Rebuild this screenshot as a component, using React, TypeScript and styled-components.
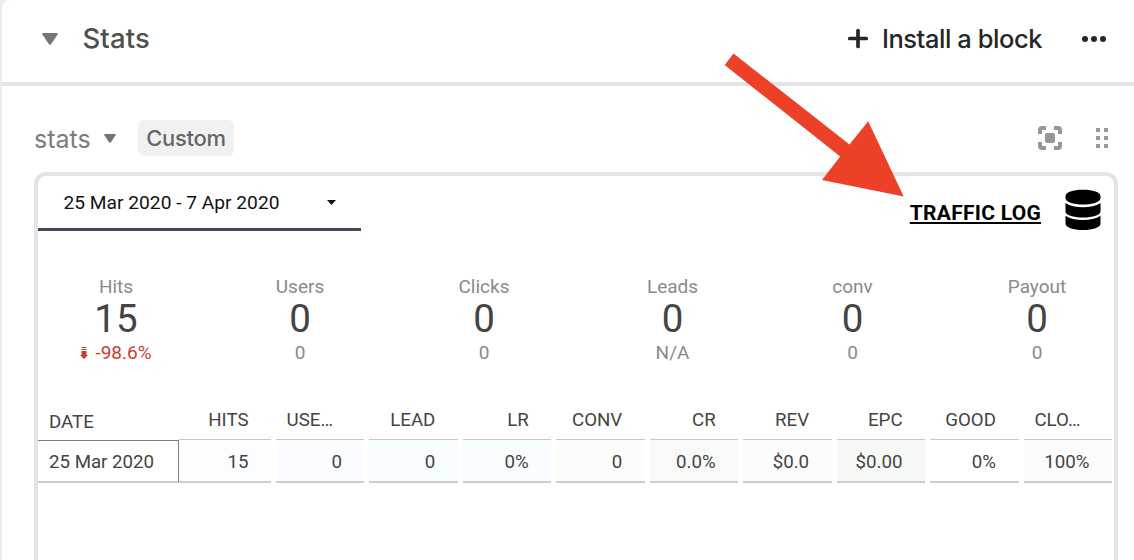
import React from "react";
import styled, { createGlobalStyle } from "styled-components";

const GlobalStyle = createGlobalStyle`
  *, *::before, *::after { box-sizing: border-box; }
  body { margin: 0; background: #ececec; overflow: hidden; }
`;

const Page = styled.main`
  position: relative;
  display: flex;
  flex-direction: column;
  height: 560px;
  margin-left: 2px;
  background: #fff;
  border-top-left-radius: 8px;
  overflow: hidden;
  font-family: Inter, "Liberation Sans", sans-serif;
`;

const Header = styled.header`
  display: flex;
  align-items: center;
  flex: none;
  height: 86px;
  padding: 0 28px 4px 40px;
  border-bottom: 4px solid #e4e4e4;
`;

const Title = styled.h1`
  margin: -2px auto 0 24.5px;
  font-size: 27.5px;
  font-weight: 500;
  line-height: 32px;
  letter-spacing: 0.1px;
  color: #505050;
`;

const InstallButton = styled.button`
  display: flex;
  align-items: center;
  gap: 14px;
  margin: 0 40px 0 0;
  padding: 0;
  border: 0;
  background: none;
  font: 500 25.5px/32px Inter, "Liberation Sans", sans-serif;
  letter-spacing: -0.45px;
  color: #262626;
  white-space: nowrap;
`;

const Icon = styled.svg`
  display: block;
  flex: none;
  overflow: visible;
`;

const BlockBar = styled.div`
  display: flex;
  align-items: center;
  flex: none;
  height: 36px;
  margin: 34px 26px 16px 32px;
`;

const BlockName = styled.span`
  width: 57px;
  margin-right: 13px;
  padding-top: 1px;
  font-size: 25px;
  line-height: 36px;
  color: #7c7c7c;
`;

const Tag = styled.span`
  width: 96px;
  height: 36px;
  margin: 0 auto 0 22px;
  border-radius: 6px;
  background: #f1f1f1;
  font-size: 22px;
  font-weight: 500;
  letter-spacing: -0.3px;
  line-height: 36px;
  text-align: center;
  color: #666;
`;

const BarIcons = styled.div`
  display: flex;
  align-items: center;
  gap: 34px;
`;

const Report = styled.section`
  display: flex;
  flex-direction: column;
  flex: none;
  width: 1084px;
  height: 420px;
  margin-left: 32px;
  border: 4px solid #e4e4e4;
  border-radius: 12px;
  font-family: Roboto, "Liberation Sans", sans-serif;
`;

const ReportTop = styled.div`
  display: flex;
  align-items: flex-start;
  justify-content: space-between;
  height: 94px;
`;

const DateRange = styled.div`
  display: flex;
  align-items: center;
  justify-content: space-between;
  width: 323px;
  height: 55px;
  padding: 1px 25px 0 25.5px;
  border-bottom: 3px solid #414559;
  font-size: 19.2px;
  color: #111;
`;

const LogLink = styled.div`
  display: flex;
  align-items: center;
  gap: 24px;
  margin: 13px 13px 0 0;
`;

const LogText = styled.a`
  margin-top: 6px;
  font-size: 21px;
  font-weight: 700;
  line-height: 24px;
  letter-spacing: 0.27px;
  color: #000;
  text-decoration: underline;
  text-decoration-thickness: 2px;
  text-underline-offset: 2px;
  text-decoration-skip-ink: none;
`;

const Scores = styled.div`
  display: grid;
  grid-template-columns: 184px 184px 188.5px 180px 184.5px 140px;
  height: 133px;
  padding-left: 8px;
`;

const Score = styled.div`
  display: flex;
  flex-direction: column;
  align-items: center;
  width: 140px;
  padding-top: 5px;
`;

const ScoreLabel = styled.span`
  font-size: 19px;
  line-height: 24px;
  color: #8a8a8a;
`;

const ScoreValue = styled.span`
  font-size: 38.5px;
  line-height: 40px;
  color: #444;
`;

const ScoreDelta = styled.span<{ $negative?: boolean }>`
  display: flex;
  align-items: center;
  gap: 7px;
  margin-top: 2px;
  font-size: 19px;
  line-height: 24px;
  color: ${(p) => (p.$negative ? "#c83c34" : "#8a8a8a")};
`;

const Table = styled.div`
  display: flex;
  flex-direction: column;
`;

const Row = styled.div`
  display: grid;
  grid-template-columns: 136px 92px repeat(9, 88.45px);
  column-gap: 5px;
  width: 1074px;
`;

const HeadCell = styled.div<{ $date?: boolean }>`
  height: 36px;
  padding: ${(p) => (p.$date ? "7px 0 0 11px" : "5px 22.5px 0 10px")};
  font-size: 18.7px;
  line-height: 24px;
  text-align: ${(p) => (p.$date ? "left" : "right")};
  color: #444;
  white-space: nowrap;
`;

const Clipped = styled(HeadCell)`
  padding: 5px 31.5px 0 0;
`;

const Cell = styled.div<{ $fill?: string }>`
  height: 44px;
  padding-right: 22.5px;
  border-top: 1px solid #c8c8c8;
  border-bottom: 2px solid #cccdce;
  background: ${(p) => p.$fill || "#fff"};
  font-size: 18.7px;
  line-height: 45px;
  text-align: right;
  color: #444;
`;

const DateCell = styled(Cell)`
  height: 43px;
  margin: 1px -5px 0 0;
  padding: 0 0 0 11px;
  border-top-color: #7c7c7c;
  border-right: 1px solid #7c7c7c;
  line-height: 43px;
  text-align: left;
`;

const Pointer = styled.svg`
  position: absolute;
  left: 722px;
  top: 50px;
  pointer-events: none;
`;

const scores = [
  { label: "Hits", value: "15", delta: "-98.6%", down: true },
  { label: "Users", value: "0", delta: "0" },
  { label: "Clicks", value: "0", delta: "0" },
  { label: "Leads", value: "0", delta: "N/A" },
  { label: "conv", value: "0", delta: "0" },
  { label: "Payout", value: "0", delta: "0" },
];

const columns = [
  { name: "HITS", value: "15", fill: "#fcfdff" },
  { name: "USE…", value: "0", fill: "#fafcff", clipped: true },
  { name: "LEAD", value: "0", fill: "#f8fdff" },
  { name: "LR", value: "0%", fill: "#f8fdff" },
  { name: "CONV", value: "0", fill: "#fbfdfb" },
  { name: "CR", value: "0.0%", fill: "#f8faf8" },
  { name: "REV", value: "$0.0", fill: "#fcfcfc" },
  { name: "EPC", value: "$0.00", fill: "#f7f9f7" },
  { name: "GOOD", value: "0%", fill: "#ffffff" },
  { name: "CLO…", value: "100%", fill: "#fcfcfc", clipped: true },
];

const Caret = ({ width, height, color }: { width: number; height: number; color: string }) => (
  <Icon width={width} height={height} viewBox="0 0 16 12" preserveAspectRatio="none">
    <path d="M1 0H15Q16.500 .3 15.500 1.800L9 11.200Q8 12.500 7 11.200L.5 1.800Q-.5 .3 1 0Z" fill={color} />
  </Icon>
);

const Database = () => (
  <Icon width="36" height="42" viewBox="0 0 36 42">
    <path d="M.5 7C.5 3 8 .7 18 .7S35.500 3 35.500 7V9C35.500 13 28 15.500 18 15.500S.5 13 .5 9Z" />
    <path d="M.5 14C5 17 11 18.200 18 18.200S31 17 35.500 14V22.500C35.500 26 28 28.500 18 28.500S.5 26 .5 22.500Z" />
    <path d="M.5 26.800C5 30 11 31 18 31S31 30 35.500 26.800V34.500C35.500 38.500 28 41 18 41S.5 38.500 .5 34.500Z" />
  </Icon>
);

export default function App() {
  return (
    <>
      <GlobalStyle />
      <Page>
        <Header>
          <Caret width={16} height={12} color="#767676" />
          <Title>Stats</Title>
          <InstallButton>
            <Icon width="20" height="20" viewBox="0 0 20 20">
              <path d="M10 1.500V17.500M1.700 9.500H18.300" stroke="#262626" strokeWidth="3.700" strokeLinecap="round" />
            </Icon>
            Install a block
          </InstallButton>
          <Icon width="24" height="6" viewBox="0 0 24 6" fill="#262626">
            <circle cx="3" cy="3" r="3" />
            <circle cx="12" cy="3" r="3" />
            <circle cx="21" cy="3" r="3" />
          </Icon>
        </Header>
        <BlockBar>
          <BlockName>stats</BlockName>
          <Caret width={12} height={9} color="#737373" />
          <Tag>Custom</Tag>
          <BarIcons>
            <Icon width="24" height="24" viewBox="0 0 24 24">
              <path d="M2 8V4Q2 2 4 2H8M16 2H20Q22 2 22 4V8M22 16V20Q22 22 20 22H16M8 22H4Q2 22 2 20V16" fill="none" stroke="#969696" strokeWidth="4" />
              <rect x="7" y="7" width="10" height="10" rx="2" fill="#969696" />
            </Icon>
            <Icon width="12" height="20" viewBox="0 0 12 20" fill="#969696">
              {[0, 8, 16].map((y) => (
                <React.Fragment key={y}>
                  <rect x="0" y={y} width="4" height="4" rx=".7" />
                  <rect x="8" y={y} width="4" height="4" rx=".7" />
                </React.Fragment>
              ))}
            </Icon>
          </BarIcons>
        </BlockBar>
        <Report>
          <ReportTop>
            <DateRange>
              25 Mar 2020 - 7 Apr 2020
              <Icon width="9" height="5" viewBox="0 0 9 5">
                <path d="M0 0H9L4.500 5Z" fill="#111" />
              </Icon>
            </DateRange>
            <LogLink>
              <LogText>TRAFFIC LOG</LogText>
              <Database />
            </LogLink>
          </ReportTop>
          <Scores>
            {scores.map((s) => (
              <Score key={s.label}>
                <ScoreLabel>{s.label}</ScoreLabel>
                <ScoreValue>{s.value}</ScoreValue>
                <ScoreDelta $negative={s.down}>
                  {s.down && (
                    <Icon width="8" height="12" viewBox="0 0 8 12" fill="#c83c34">
                      <path d="M1.500 0H6.500V1H1.500ZM1.500 2H6.500V3H1.500ZM1.500 4H6.500V8H8L4 12L0 8H1.500Z" />
                    </Icon>
                  )}
                  {s.delta}
                </ScoreDelta>
              </Score>
            ))}
          </Scores>
          <Table>
            <Row>
              <HeadCell $date>DATE</HeadCell>
              {columns.map((c) =>
                c.clipped ? <Clipped key={c.name}>{c.name}</Clipped> : <HeadCell key={c.name}>{c.name}</HeadCell>
              )}
            </Row>
            <Row>
              <DateCell>25 Mar 2020</DateCell>
              {columns.map((c) => (
                <Cell key={c.name} $fill={c.fill}>{c.value}</Cell>
              ))}
            </Row>
          </Table>
        </Report>
        <Pointer width="184" height="150" viewBox="0 0 184 150">
          <path d="M9.500 3.500L125.500 94.500L144.200 71.200L179.700 146.500L98 130L116.200 106.500L.7 15Z" fill="#ed4127" />
        </Pointer>
      </Page>
    </>
  );
}
